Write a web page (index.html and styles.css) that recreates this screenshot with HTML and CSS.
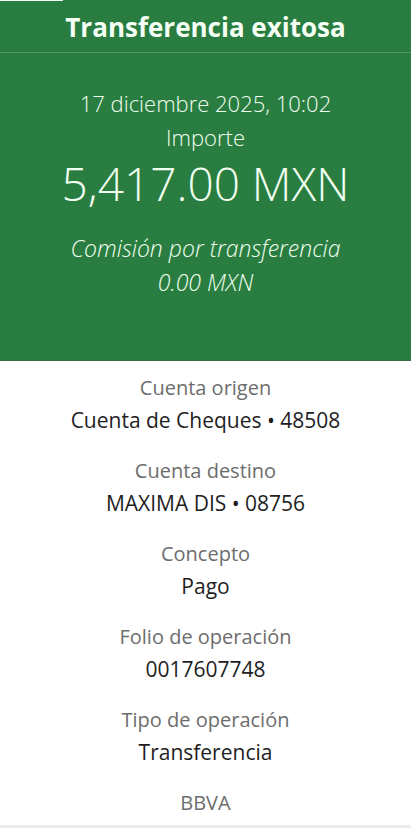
FILE: index.html
```html
<!DOCTYPE html>
<html lang="es">

<head>
    <meta charset="UTF-8">
    <meta name="viewport" content="width=device-width, initial-scale=1.0">
    <title>Transferencia exitosa</title>
    <link rel="stylesheet" href="styles.css">
</head>

<body>
    <div class="progress"></div>

    <div class="summary">
        <h1 class="title">Transferencia exitosa</h1>
        <div class="summary-body">
            <p class="date">17 diciembre 2025, 10:02</p>
            <p class="amount-label">Importe</p>
            <p class="amount">5,417.00 MXN</p>
            <p class="fee">Comisión por transferencia</p>
            <p class="fee">0.00 MXN</p>
        </div>
    </div>

    <div class="details">
        <div class="item">
            <span class="label">Cuenta origen</span>
            <span class="value">Cuenta de Cheques • 48508</span>
        </div>
        <div class="item">
            <span class="label">Cuenta destino</span>
            <span class="value">MAXIMA DIS • 08756</span>
        </div>
        <div class="item">
            <span class="label">Concepto</span>
            <span class="value">Pago</span>
        </div>
        <div class="item">
            <span class="label">Folio de operación</span>
            <span class="value">0017607748</span>
        </div>
        <div class="item">
            <span class="label">Tipo de operación</span>
            <span class="value">Transferencia</span>
        </div>
        <div class="item">
            <span class="label">BBVA</span>
        </div>
    </div>

    <div class="footer"></div>
</body>

</html>
```

FILE: styles.css
```css
body {
    font-family: "Open Sans", "Liberation Sans", sans-serif;
    margin: 0;
    padding: 0;
    background-color: #fff;
    height: 828px;
    overflow: hidden;
    position: relative;
}

p {
    margin: 0;
}

.progress {
    position: absolute;
    top: 0;
    left: 0;
    width: 63px;
    height: 1px;
    background-color: #f4fff4;
}

.summary {
    background-color: #297d40;
    color: #f1fff0;
    text-align: center;
    border-bottom: 1px solid #3f6a48;
}

.title {
    margin: 0;
    height: 52px;
    line-height: 54px;
    font-size: 26px;
    font-weight: 700;
    color: #f5fff5;
    border-bottom: 1px solid #4f9a62;
}

.summary-body {
    padding: 33px 0 61px;
}

.date,
.amount-label {
    font-size: 22px;
    line-height: 34px;
    font-weight: 300;
}

.amount {
    margin-top: 3px;
    font-size: 46px;
    line-height: 52px;
    font-weight: 300;
}

.fee {
    font-size: 23px;
    line-height: 34px;
    font-style: italic;
    font-weight: 300;
}

.amount + .fee {
    margin-top: 22px;
}

.details {
    display: flex;
    flex-direction: column;
    gap: 17px;
    padding-top: 10px;
    text-align: center;
}

.item {
    display: flex;
    flex-direction: column;
}

.label {
    font-size: 20px;
    line-height: 33px;
    color: #6d6d6d;
}

.value {
    font-size: 21px;
    line-height: 33px;
    color: #1e1e1e;
}

.footer {
    position: absolute;
    left: 0;
    right: 0;
    bottom: 0;
    height: 3px;
    background-color: #ececec;
}
```
